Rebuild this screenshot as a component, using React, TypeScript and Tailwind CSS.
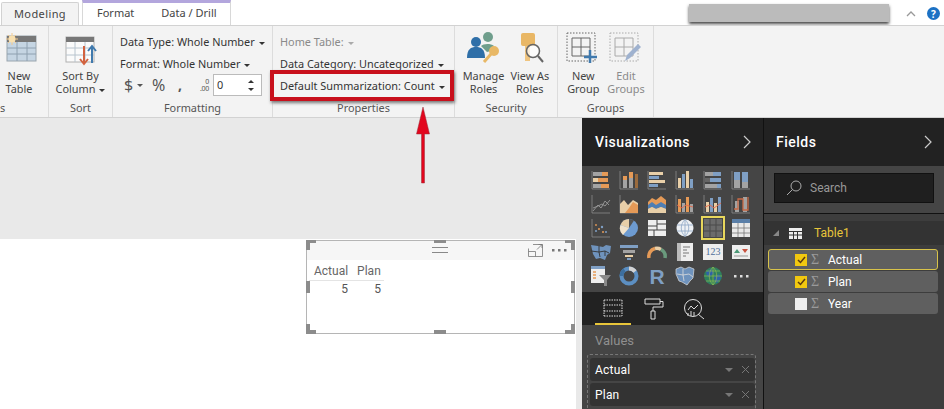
import type { ReactNode } from "react";

const OR = "#e59a57";
const TN = "#e8cfa8";
const BL = "#7f9fc4";
const GR = "#a3a3a3";
const AX = "#8c8c8c";

type Bar = [number, number, number, number, string];

function Bars({ bars, axis = true, children }: { bars: Bar[]; axis?: boolean; children?: ReactNode }) {
  return (
    <svg width="20" height="20" viewBox="0 0 20 20">
      {bars.map((b, i) => (
        <rect key={i} x={b[0]} y={b[1]} width={b[2]} height={b[3]} fill={b[4]} />
      ))}
      {axis && <path d="M1 1v18h18" fill="none" stroke={AX} strokeWidth="0.8" />}
      {children}
    </svg>
  );
}

function Dots({ fill, w = 17 }: { fill: string; w?: number }) {
  return (
    <svg width={w} height="3" viewBox="0 0 17 3">
      <rect x="1" width="2.500" height="2.500" fill={fill} />
      <rect x="7" width="2.500" height="2.500" fill={fill} />
      <rect x="13" width="2.500" height="2.500" fill={fill} />
    </svg>
  );
}

const vizIcons: ReactNode[] = [
  <Bars bars={[[2, 2, 9, 4, GR], [11, 2, 6, 4, OR], [2, 8, 5, 4, TN], [7, 8, 10, 4, OR], [2, 14, 8, 4, GR], [10, 14, 8, 4, OR]]} />,
  <Bars bars={[[4, 10, 4, 8, GR], [4, 6, 4, 4, OR], [10, 8, 4, 10, GR], [10, 2, 4, 6, OR], [16, 4, 3, 14, "#9b6b3d"]]} />,
  <Bars bars={[[2, 2, 14, 3, TN], [2, 6, 10, 3, BL], [2, 10, 16, 3, TN], [2, 14, 9, 3, BL]]} />,
  <Bars bars={[[3, 8, 3, 10, TN], [7, 4, 3, 14, BL], [11, 1, 3, 17, TN], [15, 9, 3, 9, BL]]} />,
  <Bars bars={[[2, 2, 8, 4, GR], [10, 2, 8, 4, BL], [2, 8, 5, 4, "#666"], [7, 8, 11, 4, BL], [2, 14, 12, 4, GR], [14, 14, 4, 4, BL]]} />,
  <Bars bars={[[3, 10, 6, 8, GR], [3, 2, 6, 8, BL], [11, 12, 6, 6, GR], [11, 2, 6, 10, BL]]} />,
  <Bars bars={[]}>
    <path d="M2 17l5-6 3 3 4-7 4 4M2 14l5-2 4-2 3 2 5-6" fill="none" stroke="#9a9a9a" strokeWidth="0.9" />
  </Bars>,
  <Bars bars={[]}>
    <path d="M1 19V10l4-4 4 5 5-5 5 3v10z" fill={TN} />
    <path d="M6 19l4-5 4-6 5 3v8z" fill={OR} />
  </Bars>,
  <Bars bars={[]} axis={false}>
    <path d="M1 8l4-4 4 2 5-4 5 4v13H1z" fill={OR} />
    <path d="M1 11l4-3 4 3 5-3 5 3v4l-5-2-5 2-4-2-4 2z" fill="#4f7eb3" />
    <path d="M1 15l4-2 4 2 5-2 5 2v4H1z" fill={TN} />
  </Bars>,
  <Bars bars={[[3, 5, 3, 13, OR], [7, 9, 3, 9, GR], [11, 3, 3, 15, OR], [15, 10, 3, 8, GR]]}>
    <path d="M2 11l5 3 4-3 7 2" fill="none" stroke="#e86a4a" strokeWidth="0.9" />
  </Bars>,
  <Bars bars={[[3, 8, 3, 10, TN], [7, 4, 3, 14, BL], [11, 9, 3, 9, TN], [15, 3, 3, 15, BL]]}>
    <path d="M2 13l5-2 4 3 7-5" fill="none" stroke="#e86a4a" strokeWidth="0.9" />
  </Bars>,
  <Bars bars={[[4, 7, 4, 11, GR], [12, 3, 4, 15, GR]]}>
    <path d="M3 15h4V5h5v11h5V3" fill="none" stroke="#c96a45" strokeWidth="1.3" />
  </Bars>,
  <Bars bars={[]}>
    <g fill={BL}>
      <circle cx="5" cy="13" r="1" />
      <circle cx="11" cy="9" r="1.2" />
      <circle cx="15" cy="14" r="1" />
    </g>
    <g fill={OR}>
      <circle cx="8" cy="11" r="1" />
      <circle cx="12" cy="14" r="1" />
      <circle cx="5" cy="7" r="0.9" />
    </g>
  </Bars>,
  <svg width="20" height="20" viewBox="0 0 20 20">
    <circle cx="10" cy="10" r="9" fill="#6d9bd1" />
    <path d="M10 10V1A9 9 0 0 0 1.500 7z" fill={TN} />
    <path d="M10 10L1.500 7A9 9 0 0 0 4 17z" fill="#f0e2cb" />
    <path d="M10 10V1a9 9 0 0 1 5 1.500z" fill="#555" />
  </svg>,
  <svg width="20" height="20" viewBox="0 0 20 20">
    <rect x="1" y="2" width="18" height="16" fill="#eee" />
    <path d="M1 8h9M10 2v10M1 12h18M7 12v6M10 6h9" stroke="#444" strokeWidth="1" />
  </svg>,
  <svg width="20" height="20" viewBox="0 0 20 20">
    <circle cx="10" cy="10" r="8.500" fill="#eef1f4" />
    <path d="M2 7h16M2 13h16M10 1.500v17M10 1.500c-5 5-5 12 0 17M10 1.500c5 5 5 12 0 17" fill="none" stroke="#8aa5c4" strokeWidth="0.8" />
  </svg>,
  <svg width="20" height="20" viewBox="0 0 20 20">
    <rect x="1" y="1" width="18" height="18" fill="#6b6b6b" />
    <path d="M1 7h18M1 13h18M7 1v18M13 1v18" stroke="#4a4a4a" strokeWidth="1" />
  </svg>,
  <svg width="20" height="20" viewBox="0 0 20 20">
    <rect x="1" y="1" width="18" height="18" fill="#e9e9e9" />
    <rect x="1" y="1" width="18" height="4" fill="#5a7fa8" />
    <path d="M1 10h18M1 15h18M7 5v14M13 5v14" stroke="#777" strokeWidth="0.8" />
  </svg>,
  <svg width="22" height="20" viewBox="0 0 22 20">
    <path d="M1 3l7 1 5 1 3-2 5 1-1 7-3 2-2 5-5-2-4 1-3-5z" fill="#6f93bd" />
    <path d="M1 9l8 1 1 5M9 4v6l6-1 4 2M15 9v5" fill="none" stroke="#333" strokeWidth="0.9" />
  </svg>,
  <svg width="20" height="20" viewBox="0 0 20 20">
    <path d="M1 3h18v3H1z" fill={BL} />
    <path d="M4 8h12v3H4z" fill={GR} />
    <path d="M6 13h8v2H6z" fill={TN} />
    <path d="M8 16h4v2H8z" fill={BL} />
  </svg>,
  <svg width="20" height="20" viewBox="0 0 20 20" fill="none" strokeWidth="3.500">
    <path d="M2 16A8 8 0 0 1 8 6.500" stroke={OR} />
    <path d="M8 6.500A8 8 0 0 1 14 7.500" stroke={TN} />
    <path d="M14 7.500A8 8 0 0 1 18 16" stroke="#6a9a7d" />
  </svg>,
  <svg width="20" height="20" viewBox="0 0 20 20">
    <rect x="2" y="1" width="16" height="18" fill="#eee" />
    <rect x="2" y="1" width="4" height="18" fill="#bbb" />
    <path d="M8 5h7M8 8h4M8 11h6M8 14h3" stroke="#777" strokeWidth="1.200" />
  </svg>,
  <div className="flex h-[16px] w-[20px] items-center justify-center bg-[#eeeeee] font-['Liberation_Serif',serif] text-[10px] leading-none text-[#4f6f9a]">123</div>,
  <svg width="20" height="20" viewBox="0 0 20 20">
    <rect x="1" y="3" width="18" height="14" fill="#eee" />
    <path d="M3 11l3-4 3 4z" fill="#4d9a78" />
    <path d="M11 7h6l-3 4z" fill="#c9523f" />
    <path d="M3 14h14" stroke="#999" />
  </svg>,
  <svg width="20" height="20" viewBox="0 0 20 20">
    <rect x="0" y="0" width="14" height="17" fill="#eee" />
    <rect x="0" y="0" width="14" height="3" fill="#7f9fc4" />
    <path d="M2 6h3M2 9h3M2 12h3" stroke={OR} strokeWidth="1.500" />
    <path d="M8 9h12l-4 5v6h-3v-6z" fill="#8a8a8a" />
  </svg>,
  <svg width="20" height="20" viewBox="0 0 20 20" fill="none" strokeWidth="4">
    <circle cx="10" cy="10" r="7.500" stroke="#5c8fc2" />
    <path d="M10 2.500a7.500 7.500 0 0 1 6 3" stroke="#d3d3d3" />
    <path d="M2.500 10a7.500 7.500 0 0 1 3-6" stroke="#3d6f9f" />
  </svg>,
  <span className="font-['Liberation_Sans',sans-serif] text-[21px] leading-none font-bold text-[#7f9fc4]">R</span>,
  <svg width="20" height="20" viewBox="0 0 20 20">
    <path d="M1 3l5-2 4 2 4-2 5 2-1 9-3 3-3 4-5-3-3-1-3-7z" fill="#6f93bd" stroke="#ddd" strokeWidth="0.7" />
    <path d="M2 8l6 1 1 6M8 3v6l6-1 4 3" fill="none" stroke="#ddd" strokeWidth="0.8" />
  </svg>,
  <svg width="20" height="20" viewBox="0 0 20 20">
    <circle cx="10" cy="10" r="9" fill="#2f7f5e" />
    <path d="M3 6l5-3 3 4-4 4-3-1zM11 11l5-3 2 4-4 5-2-1z" fill="#2f62a8" />
    <path d="M1 10h18M10 1v18M10 1c-5 5-5 13 0 18M10 1c5 5 5 13 0 18M3 5h14M3 15h14" fill="none" stroke="#99c24d" strokeWidth="0.6" />
  </svg>,
  <Dots fill="#dddddd" />,
];

function Caret({ color = "#333" }: { color?: string }) {
  return <span className="ml-[4px] inline-block h-0 w-0 border-x-[3px] border-t-[3px] border-x-transparent align-middle" style={{ borderTopColor: color }} />;
}

function Group({ width, title, left, children }: { width: string; title: string; left?: boolean; children: ReactNode }) {
  return (
    <div className={`${width} flex h-full shrink-0 flex-col border-r border-[#dcdcdc]`}>
      <div className="flex min-h-0 flex-1">{children}</div>
      <div className={`pb-[1px] text-[10.9px] leading-[16px] text-[#555555] ${left ? "text-left" : "text-center"}`}>{title}</div>
    </div>
  );
}

function BigButton({ icon, line1, line2, caret, muted }: { icon: ReactNode; line1: string; line2: string; caret?: boolean; muted?: boolean }) {
  return (
    <div className={`flex flex-col items-center pt-[6px] text-[10.9px] leading-[13px] ${muted ? "text-[#8a8a8a]" : "text-[#444444]"}`}>
      <div className="flex h-[37px] items-start justify-center">{icon}</div>
      <div>{line1}</div>
      <div className="whitespace-nowrap">
        {line2}
        {caret && <Caret />}
      </div>
    </div>
  );
}

function MenuLine({ label, muted }: { label: string; muted?: boolean }) {
  return (
    <div className={`h-[22px] whitespace-nowrap text-[10.9px] leading-[22px] ${muted ? "text-[#8a8a8a]" : "text-[#333333]"}`}>
      {label}
      <Caret color={muted ? "#aaa" : "#333"} />
    </div>
  );
}

function Ribbon() {
  return (
    <div className="flex h-[93px] border-y border-[#d2d2d2] bg-[#f3f3f3]">
      <Group width="w-[49px]" title="s" left>
        <div className="ml-[1px]">
          <BigButton
            line1="New"
            line2="Table"
            icon={
              <svg className="mt-[1px]" width="36" height="30" viewBox="0 0 36 30">
                <rect x="6" y="3" width="29" height="25" fill="#c5d5e3" stroke="#9aa5ae" />
                <rect x="6" y="3" width="29" height="6" fill="#777777" />
                <path d="M6 15h29M6 21h29M16 9v19M26 9v19" stroke="#8ea0b0" />
                <path d="M11 0v12M5 6h12M7 2l8 8M15 2l-8 8" stroke="#f4c98c" />
                <circle cx="11" cy="6" r="3.500" fill="#f8e0b0" />
              </svg>
            }
          />
        </div>
      </Group>
      <Group width="w-[64px]" title="Sort">
        <div className="w-full">
          <BigButton
            line1="Sort By"
            line2="Column"
            caret
            icon={
              <svg className="mt-[3px]" width="32" height="32" viewBox="0 0 32 32">
                <rect x="1" y="2" width="28" height="25" fill="#fbfbfb" stroke="#b0b0b0" />
                <rect x="1" y="2" width="28" height="5" fill="#777777" />
                <path d="M1 13h28M1 20h28M10 7v20M20 7v20" stroke="#b8c4ce" />
                <path d="M19 11v17M15 24l4 5 4-5" fill="none" stroke="#d2623f" strokeWidth="2" />
                <path d="M27 28V11M23 16l4-5 4 5" fill="none" stroke="#3f79ad" strokeWidth="2" />
              </svg>
            }
          />
        </div>
      </Group>
      <Group width="w-[160px]" title="Formatting">
        <div className="pt-[5px] pl-[7px]">
          <MenuLine label="Data Type: Whole Number" />
          <MenuLine label="Format: Whole Number" />
          <div className="-mt-[1px] flex h-[22px] items-center text-[#555555]">
            <span className="ml-[4px] w-[9px] text-[16px]">$</span>
            <Caret color="#555" />
            <span className="ml-[9px] w-[13px] text-[16px] leading-none">%</span>
            <span className="ml-[13px] w-[4px] text-[14px] leading-none font-bold">,</span>
            <span className="ml-[15px] flex w-[12px] flex-col items-end text-[7px] leading-[7px] tracking-[-0.3px]">
              <span>0</span>
              <span>.00</span>
            </span>
            <div className="relative ml-[4px] flex h-[22px] w-[49px] items-center border border-[#bbbbbb] bg-white pl-[3px] text-[10.9px] text-[#333333]">
              0
              <div className="absolute right-[7px] flex flex-col gap-[5px]">
                <span className="h-0 w-0 border-x-[3px] border-b-[3px] border-x-transparent border-b-[#333333]" />
                <span className="h-0 w-0 border-x-[3px] border-t-[3px] border-x-transparent border-t-[#333333]" />
              </div>
            </div>
          </div>
        </div>
      </Group>
      <Group width="w-[182px]" title="Properties">
        <div className="pt-[5px] pl-[7px]">
          <MenuLine label="Home Table:" muted />
          <MenuLine label="Data Category: Uncategorized" />
          <MenuLine label="Default Summarization: Count" />
        </div>
      </Group>
      <Group width="w-[103px]" title="Security">
        <div className="flex w-full justify-center gap-[6px]">
          <BigButton
            line1="Manage"
            line2="Roles"
            icon={
              <svg width="36" height="32" viewBox="0 0 36 32">
                <circle cx="22" cy="5" r="5" fill="#6f9e8c" />
                <circle cx="10" cy="10" r="5" fill="#2f6fa8" />
                <path d="M1 26c0-9 4-11 9-11s9 2 9 11z" fill="#2f6fa8" />
                <path d="M15 14c2-2 9-3 13 0l-3 5-4 1z" fill="#6f9e8c" />
                <path d="M18 30l7-8" stroke="#e8b866" strokeWidth="3" />
                <circle cx="28" cy="19" r="5" fill="#e8b866" />
              </svg>
            }
          />
          <BigButton
            line1="View As"
            line2="Roles"
            icon={
              <svg width="30" height="32" viewBox="0 0 30 32">
                <path d="M10 13h5v16h-5z" fill="#efc47f" />
                <rect x="6" y="1" width="14" height="13" rx="2" fill="#e9b765" />
                <circle cx="18" cy="19" r="6.500" fill="#fff" fillOpacity="0.7" stroke="#666" strokeWidth="1.500" />
                <path d="M23 24l5 6" stroke="#666" strokeWidth="2" />
              </svg>
            }
          />
        </div>
      </Group>
      <Group width="w-[96px]" title="Groups">
        <div className="flex w-full justify-center gap-[7px]">
          <BigButton
            line1="New"
            line2="Group"
            icon={
              <svg width="34" height="32" viewBox="0 0 34 32">
                <rect x="1" y="1" width="28" height="28" fill="none" stroke="#666" strokeDasharray="1.500 1.500" />
                <path d="M6 6h18v18H6zM6 15h18M15 6v18" fill="none" stroke="#666" />
                <path d="M24 18v13M18 25h13" stroke="#3f79ad" strokeWidth="2.500" />
              </svg>
            }
          />
          <BigButton
            muted
            line1="Edit"
            line2="Groups"
            icon={
              <svg width="34" height="32" viewBox="0 0 34 32">
                <rect x="1" y="1" width="28" height="28" fill="none" stroke="#aaa" strokeDasharray="1.500 1.500" />
                <path d="M6 6h18v18H6zM6 15h18M15 6v18" fill="none" stroke="#aaa" />
                <path d="M16 29l2-6 11-11 3 3-11 11z" fill="#9fb2cf" />
              </svg>
            }
          />
        </div>
      </Group>
    </div>
  );
}

function TopBar() {
  return (
    <div className="flex h-[25px] items-end text-[11px] text-[#444444]">
      <div className="ml-[1px] flex h-[23px] w-[78px] items-center justify-center rounded-t-[2px] border-x border-t border-[#d2d2d2] bg-[#f3f3f3] tracking-[0.4px]">Modeling</div>
      <div className="ml-[3px] flex h-[25px] w-[149px] items-center border-x border-t-[3px] border-x-[#d8d8d8] border-t-[#b3a6dd] bg-white pb-[2px]">
        <span className="ml-[14px]">Format</span>
        <span className="ml-[27px]">Data / Drill</span>
      </div>
      <div className="mb-[3px] ml-[458px] h-[18px] w-[200px] self-end bg-[#bbbbbb] shadow-[0_2px_3px_#444444]" />
      <svg className="mb-[7px] ml-[17px]" width="10" height="8" viewBox="0 0 10 8">
        <path d="M1 6l4-4 4 4" fill="none" stroke="#999" strokeWidth="1.300" />
      </svg>
      <div className="mb-[5px] ml-[11px] flex h-[13px] w-[13px] items-center justify-center rounded-full bg-[#1c71c4] text-[10px] leading-none font-bold text-white">?</div>
    </div>
  );
}

function Handle({ className }: { className: string }) {
  return <div className={`absolute bg-[#8c8c8c] ${className}`} />;
}

function Canvas() {
  return (
    <div className="relative flex w-[582px] shrink-0 flex-col bg-[#e9e9e9]">
      <div className="h-[121px]" />
      <div className="w-[576px] flex-1 bg-white" />

      <div className="absolute top-[122px] left-[306px] h-[94px] w-[269px] border border-[#b5b5b5] bg-white text-[12px] text-[#666666]">
        <div className="h-[19px] bg-[#f6f6f6]" />
        <div className="pt-[4px] pl-[2px] leading-[15px]">
          <div className="flex w-[75px] gap-[9px] border-b border-[#e4e4e4] pb-[1px] pl-[5px]">
            <span>Actual</span>
            <span>Plan</span>
          </div>
          <div className="flex w-[75px] pt-[1px] text-[#555555]">
            <span className="w-[39px] text-right">5</span>
            <span className="w-[33px] text-right">5</span>
          </div>
        </div>
        <div className="absolute top-[6px] left-[125px] h-[6px] w-[16px] border-y border-[#888888]" />
        <svg className="absolute top-[3px] left-[221px]" width="15" height="13" viewBox="0 0 15 13">
          <path d="M5 .5h9.500v12H.5V4.500M.5 7.500h7v5M9 5.500l5-5M10.500.5H14V4" fill="none" stroke="#777" strokeWidth="0.8" />
        </svg>
        <div className="absolute top-[8px] left-[244px] leading-none">
          <Dots fill="#777777" />
        </div>
        <Handle className="-top-px -left-px h-[3px] w-[10px]" />
        <Handle className="-top-px -left-px h-[10px] w-[4px]" />
        <Handle className="-top-px -right-px h-[3px] w-[10px]" />
        <Handle className="-top-px -right-px h-[10px] w-[4px]" />
        <Handle className="-bottom-px -left-px h-[4px] w-[10px]" />
        <Handle className="-bottom-px -left-px h-[10px] w-[4px]" />
        <Handle className="-right-px -bottom-px h-[4px] w-[10px]" />
        <Handle className="-right-px -bottom-px h-[10px] w-[4px]" />
        <Handle className="-top-px left-[127px] h-[3px] w-[12px]" />
        <Handle className="-bottom-px left-[127px] h-[4px] w-[12px]" />
        <Handle className="top-[40px] -left-px h-[12px] w-[4px]" />
        <Handle className="top-[40px] -right-px h-[12px] w-[4px]" />
      </div>
    </div>
  );
}

function PanelHeader({ title, inset }: { title: string; inset: string }) {
  return (
    <div className="flex h-[48px] shrink-0 items-center justify-between bg-[#222222] pr-[11px] text-[14px] font-medium tracking-[0.5px] text-white">
      <span className={inset}>{title}</span>
      <svg width="9" height="14" viewBox="0 0 9 14">
        <path d="M1 1l6 6-6 6" fill="none" stroke="#cccccc" strokeWidth="1.200" />
      </svg>
    </div>
  );
}

function ValueWell({ label }: { label: string }) {
  return (
    <div className="flex h-[23px] shrink-0 items-center justify-between rounded-[3px] bg-[#333333] px-[5px] text-[12px] tracking-[0.2px] text-white">
      <span>{label}</span>
      <div className="flex items-center gap-[8px]">
        <span className="h-0 w-0 border-x-[4px] border-t-[4px] border-x-transparent border-t-[#777777]" />
        <svg width="9" height="9" viewBox="0 0 9 9">
          <path d="M1 1l7 7M8 1L1 8" stroke="#777777" />
        </svg>
      </div>
    </div>
  );
}

function VizPanel() {
  return (
    <div className="flex h-[291px] w-[182px] shrink-0 flex-col border-r border-[#111111] bg-[#454545]">
      <PanelHeader title="Visualizations" inset="pl-[13px]" />
      <div className="grid h-[126px] shrink-0 auto-rows-[24px] grid-cols-[repeat(6,28px)] content-start px-[5px] pt-[2px]">
        {vizIcons.map((icon, i) => (
          <div key={i} className="flex items-center justify-center">
            {i === 16 ? <div className="flex h-[24px] w-[24px] items-center justify-center border-2 border-[#e8d75c]">{icon}</div> : icon}
          </div>
        ))}
      </div>
      <div className="flex h-[33px] shrink-0 bg-[#222222] pl-[13px]">
        <div className="flex w-[36px] items-center justify-center border-b-2 border-[#e8c53a]">
          <svg width="20" height="18" viewBox="0 0 20 18" fill="none" stroke="#ddd" strokeDasharray="1.500 1">
            <path d="M1 1h18M1 6h18M1 12h18M1 17h18M1 1v16M19 1v16" />
          </svg>
        </div>
        <svg className="mt-[6px] ml-[13px]" width="20" height="22" viewBox="0 0 20 22" fill="none" stroke="#ddd">
          <path d="M1 1h15v5H1zM16 3.500h3v5.500H9v4M7 13h4v8H7z" />
        </svg>
        <svg className="mt-[6px] ml-[19px]" width="22" height="22" viewBox="0 0 22 22" fill="none" stroke="#ddd">
          <circle cx="10" cy="10" r="8.500" />
          <path d="M15 16l6 5M5 12l3-4 3 3 4-4M5 15v3M8 13v5M11 14v4" />
        </svg>
      </div>
      <div className="min-h-0 flex-1 pr-[7px] pl-[5px]">
        <div className="pt-[7px] pl-[8px] text-[13px] leading-[18px] text-[#8f8f8f]">Values</div>
        <div className="mt-[4px] flex h-[70px] flex-col gap-[2px] rounded-[3px] border border-dashed border-[#777777] pt-[3px] pl-[2px]">
          <ValueWell label="Actual" />
          <ValueWell label="Plan" />
        </div>
      </div>
    </div>
  );
}

function FieldRow({ label, checked, active }: { label: string; checked: boolean; active?: boolean }) {
  return (
    <div className={`flex h-[21px] items-center rounded-[3px] border pl-[26px] text-[12px] text-white ${active ? "border-[#d8c34a] bg-[#5f5f5f]" : "border-transparent bg-[#5f5f5f]"}`}>
      <span className={`flex h-[12px] w-[12px] items-center justify-center ${checked ? "bg-[#f2c80f]" : "bg-[#eeeeee]"}`}>
        {checked && (
          <svg width="9" height="8" viewBox="0 0 9 8">
            <path d="M1 4l2.500 2.500L8 1" fill="none" stroke="#5a3a10" strokeWidth="1.500" />
          </svg>
        )}
      </span>
      <span className="ml-[4px] w-[11px] font-['Liberation_Serif',serif] text-[14px] leading-none text-[#9a9a9a]">Σ</span>
      <span className="ml-[6px]">{label}</span>
    </div>
  );
}

function FieldsPanel() {
  return (
    <div className="flex h-full min-w-0 flex-1 flex-col bg-[#3d3d3d]">
      <PanelHeader title="Fields" inset="pl-[12px]" />
      <div className="flex h-[48px] shrink-0 items-start border-b border-[#111111] bg-[#454545] px-[10px] pt-[7px]">
        <div className="flex h-[30px] w-[160px] items-center border border-[#111111] bg-[#1f1f1f] pl-[11px] text-[12px] text-[#999999]">
          <svg width="16" height="16" viewBox="0 0 16 16" fill="none" stroke="#aaaaaa">
            <circle cx="10" cy="6" r="5" />
            <path d="M6.500 9.500L1 15" />
          </svg>
          <span className="ml-[8px]">Search</span>
        </div>
      </div>
      <div className="mt-[7px] flex h-[24px] shrink-0 items-center bg-[#333333] pl-[9px] text-[12px] text-[#e8c53a]">
        <span className="h-0 w-0 border-b-[6px] border-l-[6px] border-b-[#888888] border-l-transparent" />
        <svg className="ml-[10px]" width="13" height="11" viewBox="0 0 13 11">
          <rect width="13" height="11" fill="#eeeeee" />
          <path d="M0 3.500h13M0 7h13M4.500 3v8M8.500 3v8" stroke="#333333" />
        </svg>
        <span className="ml-[12px]">Table1</span>
      </div>
      <div className="mt-[4px] flex flex-col gap-[1px] pr-[6px] pl-[4px]">
        <FieldRow label="Actual" checked active />
        <FieldRow label="Plan" checked />
        <FieldRow label="Year" checked={false} />
      </div>
    </div>
  );
}

function Annotations() {
  return (
    <>
      <div className="absolute top-[70px] left-[270px] h-[31px] w-[184px] border-[4px] border-[#c8101c] shadow-[1px_2px_3px_#777777]" />
      <svg className="absolute top-[107px] left-[414px]" width="18" height="77" viewBox="0 0 18 77">
        <path d="M9 0l6.500 27H10.500v49H7.500V27H2.500z" fill="#e2061d" stroke="#99303a" strokeWidth="0.5" />
      </svg>
    </>
  );
}

export default function App() {
  return (
    <div className="relative flex h-[409px] w-[944px] flex-col overflow-hidden bg-white font-['Noto_Sans',sans-serif]">
      <TopBar />
      <Ribbon />
      <div className="flex min-h-0 flex-1 overflow-hidden font-['Roboto',sans-serif]">
        <Canvas />
        <VizPanel />
        <FieldsPanel />
      </div>
      <Annotations />
    </div>
  );
}
